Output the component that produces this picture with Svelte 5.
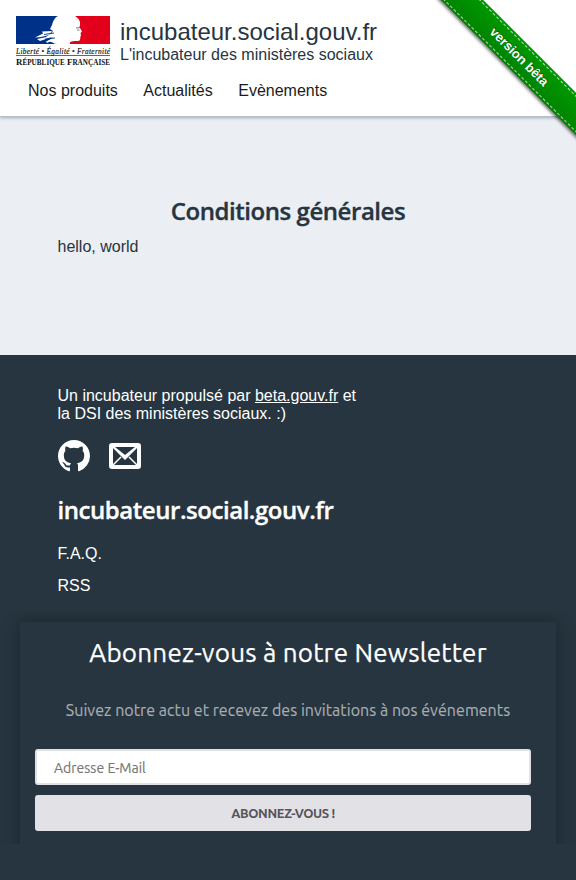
<script>
  const nav = ['Nos produits', 'Actualités', 'Evènements'];
  const links = ['F.A.Q.', 'RSS'];
</script>

<div class="page">
  <header>
    <div class="brand">
      <svg class="logo" width="96" height="52" viewBox="0 0 96 52">
        <path fill="#003189" d="M1 0H43C39 2 38 6 37 9L35 13L38 15C36 18 33 19 31 21L39 22L33 25L42 28H1Z" />
        <path fill="#e2001a" d="M60 0H95V28H55C54 25 58 25 63 25C66 25 65 22 65.500 20.500L66 19L65.500 17L67 15.500L64.500 11C66 7 65 3 60 0Z" />
        <path fill="#fff" d="M27 15.500L37 15L34 19L26 21L20 21.500L28 17.500ZM22 23L36 20L34 22L25 25ZM31 25.500L40 21L44 26L40 28L36 25L32 27Z" />
        <path fill="none" stroke="#003189" stroke-width="0.900" d="M29 18.500L39 17M30 23L40 22" />
        <path fill="none" stroke="#777" stroke-width="1" d="M61 12L65 11.500M62 14H64.500" />
        <text class="motto" x="1" y="37.500" textLength="94">Liberté • Égalité • Fraternité</text>
        <path stroke="#222" stroke-width="0.700" d="M1 39.500H95" />
        <text class="rf" x="1" y="49" textLength="94" lengthAdjust="spacingAndGlyphs">R<tspan class="sc">ÉPUBLIQUE</tspan> F<tspan class="sc">RANÇAISE</tspan></text>
      </svg>
      <div>
        <div class="name">incubateur.social.gouv.fr</div>
        <div class="tag">L'incubateur des ministères sociaux</div>
      </div>
    </div>
    <nav>
      {#each nav as item}<span>{item}</span>{/each}
    </nav>
  </header>
  <div class="ribbon"><div class="band"><span>version bêta</span></div></div>

  <main>
    <h1>Conditions générales</h1>
    <p>hello, world</p>
  </main>

  <footer>
    <div class="about">
      <p>Un incubateur propulsé par <u>beta.gouv.fr</u> et<br />la DSI des ministères sociaux. :)</p>
      <div class="icons">
        <svg width="32" height="32" viewBox="0 0 16 16"><path fill="#fff" d="M8 0C3.58 0 0 3.58 0 8c0 3.54 2.29 6.53 5.47 7.59.4.07.55-.17.55-.38 0-.19-.01-.82-.01-1.490-2.010.37-2.530-.49-2.690-.94-.09-.23-.48-.94-.82-1.130-.28-.15-.68-.52-.01-.53.63-.01 1.080.58 1.230.82.72 1.210 1.870.87 2.330.66.07-.52.28-.87.51-1.070-1.780-.2-3.640-.89-3.640-3.950 0-.87.31-1.590.82-2.150-.08-.2-.36-1.020.08-2.120 0 0 .67-.21 2.200.82.64-.18 1.320-.27 2-.27.68 0 1.360.09 2 .27 1.530-1.040 2.200-.82 2.200-.82.44 1.100.16 1.920.08 2.120.51.56.82 1.270.82 2.150 0 3.070-1.870 3.750-3.650 3.950.29.25.54.73.54 1.480 0 1.070-.01 1.930-.01 2.200 0 .21.15.46.55.38A8.013 8.013 0 0 0 16 8c0-4.420-3.580-8-8-8z" /></svg>
        <svg width="32" height="26" viewBox="0 0 32 26">
          <rect width="32" height="26" rx="3" fill="#fff" />
          <rect x="4" y="4" width="24" height="18" fill="#26353f" />
          <path fill="#fff" d="M4 4H6L16 12L26 4H28V5L16 17L4 5Z" />
          <path stroke="#fff" stroke-width="1.500" d="M4 22L12 14M28 22L20 14" />
        </svg>
      </div>
      <h2>incubateur.social.gouv.fr</h2>
      {#each links as link}<div class="link">{link}</div>{/each}
    </div>
    <div class="frame">
      <section>
        <h3><span>Abonnez-vous à notre Newsletter</span></h3>
        <p><span>Suivez notre actu et recevez des invitations à nos événements</span></p>
        <input type="email" placeholder="Adresse E-Mail" />
        <button>ABONNEZ-VOUS !</button>
      </section>
    </div>
  </footer>
</div>

<style>
  :global(body) { margin: 0; background: #26353f; }
  .page { position: relative; height: 880px; overflow: hidden; font: 16px/18px "Liberation Sans", Arial, sans-serif; color: #26353f; background: #ebeef3; }
  header { box-sizing: border-box; height: 117px; background: #fff; border-bottom: 1px solid #b4bfca; box-shadow: 0 1px 3px rgba(38, 53, 63, .35); padding: 16px 15px 0; }
  .brand { display: flex; gap: 9px; height: 52px; }
  .logo { flex: none; }
  .motto { font: italic 7.300px "Liberation Serif", serif; fill: #111; stroke: #111; stroke-width: .15px; }
  .rf { font: bold 9px "Liberation Serif", serif; fill: #111; }
  .sc { font-size: 7.300px; }
  .name { font-size: 24px; line-height: 28px; margin-top: 2px; }
  .tag { line-height: 18px; }
  nav { display: flex; gap: 25.500px; padding: 14px 13px 0; color: #1b1b1b; }
  .ribbon { position: absolute; top: 0; right: 0; width: 157px; height: 157px; overflow: hidden; font-size: 13px; }
  .band { position: absolute; top: 41.500px; right: -42.500px; width: 200px; height: 20px; padding: 5px 0; background: #090 linear-gradient(to bottom, rgba(0, 0, 0, 0), rgba(0, 0, 0, .15)); box-shadow: 0 2px 3px rgba(0, 0, 0, .5); transform: rotate(45deg); }
  .band span { display: block; height: 20px; padding: 2px 0; margin-top: -3px; border: dashed rgba(255, 255, 255, .7); border-width: 1px 0; font-weight: 700; line-height: 20px; color: #fff; text-align: center; text-shadow: 0 -1px rgba(0, 0, 0, .5); }
  main { box-sizing: border-box; height: 238px; padding: 79px 57.500px 0; }
  h1, h2 { font: 600 24px/32px "Trebuchet MS", "Open Sans", sans-serif; letter-spacing: -.45px; -webkit-text-stroke: .35px currentColor; margin: 0; white-space: nowrap; }
  h1 { text-align: center; position: relative; top: -1px; }
  main p { margin: 10px 0 0; }
  footer { background: #26353f; color: #fff; height: 525px; }
  .about { box-sizing: border-box; height: 257px; padding: 32px 57.500px 0; }
  .about p { margin: 0; }
  .icons { display: flex; align-items: center; gap: 19px; margin: 16px 0 0; height: 33px; }
  h2 { margin: 22px 0 19px; }
  .link { height: 32px; }
  .frame { height: 232px; box-sizing: border-box; padding: 10px 20px 0; overflow: hidden; }
  section { box-sizing: border-box; height: 240px; padding: 14px 25px 0 15px; box-shadow: 0 0 18px rgba(0, 0, 0, .3); font-family: Ubuntu, "Noto Sans", sans-serif; display: flex; flex-direction: column; }
  h3 { margin: 0 -10px 0 0; font-size: 26px; line-height: 34px; font-weight: 400; letter-spacing: .22px; -webkit-text-stroke: .25px currentColor; text-align: center; white-space: nowrap; }
  section p { margin: 28px -10px 0 0; color: #a8adb1; font-size: 16px; line-height: 24px; letter-spacing: .05px; -webkit-text-stroke: .15px currentColor; text-align: center; white-space: nowrap; }
  input { box-sizing: border-box; height: 36px; margin: 27px 0 10px; padding: 2px 17px 0; border: 2px solid #e2e1e6; border-radius: 3px; background: #fff; font: 14px Ubuntu, "Noto Sans", sans-serif; -webkit-text-stroke: .15px currentColor; }
  input::placeholder { color: #757575; }
  button { height: 36px; padding: 0; border: 0; border-radius: 3px; background: #e2e1e6; color: #555459; font: bold 13px Ubuntu, "Noto Sans", sans-serif; letter-spacing: -.4px; }
</style>
